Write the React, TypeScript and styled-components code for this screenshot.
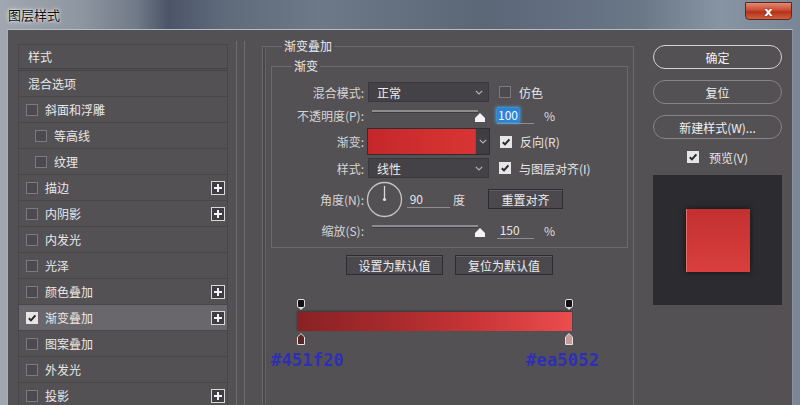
import styled, { createGlobalStyle } from 'styled-components'

const GlobalStyle = createGlobalStyle`
  html, body {
    margin: 0;
    padding: 0;
    background: #545155;
  }
  body {
    font-family: 'Noto Sans CJK SC', 'Noto Sans', sans-serif;
    font-size: 12px;
    color: #e4e4e4;
  }
  * {
    box-sizing: border-box;
  }
`

const Window = styled.div`
  width: 800px;
  height: 405px;
  overflow: hidden;
  display: flex;
  flex-direction: column;
  padding: 0 7px;
  background: linear-gradient(
    90deg,
    #a0a7b0 0%,
    #8e96a1 10%,
    #717a88 17%,
    #4b5567 21%,
    #5f6a7b 28%,
    #6d7888 40%,
    #5b6677 60%,
    #6a7787 80%,
    #8794a3 90%,
    #7a8695 100%
  );
`

const TitleBar = styled.div`
  height: 29px;
  flex-shrink: 0;
  display: flex;
  justify-content: space-between;
  align-items: flex-start;
`

const Title = styled.span`
  margin-top: 5px;
  margin-left: 1px;
  font-size: 13px;
  color: #111;
  text-shadow: 0 0 5px rgba(255, 255, 255, 0.9), 0 0 2px #fff;
`

const CloseButton = styled.div`
  margin-top: 2px;
  margin-right: 1px;
  width: 47px;
  height: 18px;
  border: 1px solid #5a2a22;
  border-radius: 0 0 4px 4px;
  background: linear-gradient(#e08a76, #cc4a32 45%, #b3321b 55%, #cf5f3f);
  display: flex;
  align-items: center;
  justify-content: center;
  color: #fff;
  font: bold 13px 'DejaVu Sans', sans-serif;
  text-shadow: 0 0 2px #6a1a10;
`

const Body = styled.div`
  flex: 1;
  display: flex;
  align-items: flex-start;
  padding: 15px 0 0 10px;
  background: #545155;
  border-top: 1px solid #b4bcc6;
  border-left: 1px solid #a6aeb8;
  border-right: 1px solid #8a94a0;
  overflow: hidden;
`

/* left list */

const Sidebar = styled.div`
  width: 227px;
  flex-shrink: 0;
  display: flex;
`

const StyleList = styled.div`
  width: 210px;
  border: 1px solid #48464a;
  border-bottom: none;
  margin-top: -1px;
`

const ListRow = styled.div<{ $indent?: boolean; $active?: boolean; $header?: boolean }>`
  height: 26px;
  display: flex;
  align-items: center;
  padding-left: ${({ $indent, $header }) => ($header ? 9 : $indent ? 16 : 7)}px;
  padding-right: 2px;
  border-bottom: 1px solid #48464a;
  background: ${({ $active }) => ($active ? '#69676b' : 'transparent')};
  color: #e8e8e8;
`

const HeaderRow = styled(ListRow)`
  border-bottom: 3px double #434145;
`

const RowLabel = styled.span`
  margin-left: 7px;
`

const ScrollTrack = styled.div`
  width: 9px;
  height: 370px;
  margin-left: 8px;
  margin-top: -4px;
  border-left: 1px solid #6e6c70;
  border-right: 1px solid #6e6c70;
`

const Box = styled.span<{ $checked?: boolean }>`
  width: 12px;
  height: 12px;
  flex-shrink: 0;
  display: flex;
  align-items: center;
  justify-content: center;
  border: 1px solid ${({ $checked }) => ($checked ? '#e6e6e6' : '#7c7a7e')};
  background: ${({ $checked }) => ($checked ? '#e6e6e6' : '#4c4a4e')};
`

const PlusBox = styled.span`
  margin-left: auto;
  width: 14px;
  height: 14px;
  display: flex;
  align-items: center;
  justify-content: center;
  border: 1px solid #d8d8d8;
  background: #3f3d41;
`

const Check = ({ checked }: { checked?: boolean }) => (
  <Box $checked={checked}>
    {checked && (
      <svg width="10" height="10" viewBox="0 0 10 10">
        <path d="M1.8 5.2 L4 7.4 L8.4 2.4" fill="none" stroke="#2a282c" strokeWidth="2" />
      </svg>
    )}
  </Box>
)

const Plus = () => (
  <PlusBox>
    <svg width="10" height="10" viewBox="0 0 10 10">
      <path d="M5 1 V9 M1 5 H9" stroke="#f2f2f2" strokeWidth="2" />
    </svg>
  </PlusBox>
)

type Item = { label: string; indent?: boolean; plus?: boolean; checked?: boolean; active?: boolean }

const items: Item[] = [
  { label: '斜面和浮雕' },
  { label: '等高线', indent: true },
  { label: '纹理', indent: true },
  { label: '描边', plus: true },
  { label: '内阴影', plus: true },
  { label: '内发光' },
  { label: '光泽' },
  { label: '颜色叠加', plus: true },
  { label: '渐变叠加', plus: true, checked: true, active: true },
  { label: '图案叠加' },
  { label: '外发光' },
  { label: '投影', plus: true },
]

/* middle panel */

const Main = styled.div`
  width: 372px;
  flex-shrink: 0;
  margin-left: 17px;
`

const OuterSet = styled.fieldset`
  margin: -7px 0 0 0;
  padding: 0 5px 0 8px;
  min-inline-size: 0;
  height: 400px;
  border: 1px solid #6c6a6e;
  box-shadow: inset 2px 0 0 #4a484c, inset 3px 0 0 #646266;
`

const Legend = styled.legend<{ $offset: number }>`
  margin-left: ${({ $offset }) => $offset}px;
  padding: 0 2px;
  line-height: 16px;
  color: #e8e8e8;
`

const InnerSet = styled.fieldset`
  margin: 4px 0 0 0;
  padding: 0 8px 7px 8px;
  min-inline-size: 0;
  border: 1px solid #6c6a6e;
`

const Controls = styled.div`
  padding-top: 8px;
  display: flex;
  flex-direction: column;
  gap: 3px;
`

const ControlRow = styled.div<{ $h: number }>`
  height: ${({ $h }) => $h}px;
  display: flex;
  align-items: center;
`

const FieldLabel = styled.span`
  width: 84px;
  margin-right: 4px;
  flex-shrink: 0;
  text-align: right;
  color: #d4d4d4;
  white-space: nowrap;
`

const Select = styled.div`
  width: 121px;
  height: 20px;
  display: flex;
  align-items: center;
  justify-content: space-between;
  padding: 0 5px 0 8px;
  background: #444246;
  border: 1px solid #3a383c;
  color: #ececec;
`

const Chevron = () => (
  <svg width="8" height="5" viewBox="0 0 8 5">
    <path d="M0.8 0.8 L4 4 L7.2 0.8" fill="none" stroke="#b4b2b6" strokeWidth="1.2" />
  </svg>
)

const CheckItem = styled.label`
  margin-left: 10px;
  display: flex;
  align-items: center;
  gap: 8px;
  color: #e4e4e4;
  white-space: nowrap;
`

const Slider = styled.div`
  position: relative;
  width: 117px;
  height: 20px;
  padding-left: 4px;
  flex-shrink: 0;
`

const Track = styled.div`
  margin-top: 5px;
  width: 106px;
  height: 2px;
  background: #8e8c90;
  box-shadow: 0 1px 0 #3e3c40;
`

const Thumb = styled.svg`
  position: absolute;
  left: 107px;
  top: 8px;
`

const ValueField = styled.div<{ $gap: number; $w?: number }>`
  margin-left: ${({ $gap }) => $gap}px;
  width: ${({ $w }) => $w ?? 37}px;
  height: 17px;
  display: flex;
  align-items: center;
  border-bottom: 1px solid #8e8c90;
  color: #e6e6e6;
  flex-shrink: 0;
`

const Selected = styled.span`
  background: #2a84da;
  color: #f4fbff;
  line-height: 14px;
  padding: 0 1px;
  box-shadow: 0 0 3px 1px #3fb2ff;
`

const Unit = styled.span<{ $gap: number }>`
  margin-left: ${({ $gap }) => $gap}px;
  color: #dcdcdc;
`

const Swatch = styled.div`
  display: flex;
  height: 27px;
  margin-left: -1px;
  border: 1px solid #302e32;
`

const SwatchFill = styled.div`
  width: 107px;
  background: linear-gradient(90deg, #c4272a, #d2302f 60%, #d83434);
`

const SwatchArrow = styled.div`
  width: 14px;
  display: flex;
  align-items: center;
  justify-content: center;
  background: #403e42;
  border-left: 1px solid #5e5c60;
`

const Dial = styled.svg`
  margin-left: -2px;
  flex-shrink: 0;
`

const FlatButton = styled.div<{ $w: number }>`
  width: ${({ $w }) => $w}px;
  height: 20px;
  display: flex;
  align-items: center;
  justify-content: center;
  background: #4b494d;
  border: 1px solid #2e2c30;
  box-shadow: inset 0 1px 0 #605e62;
  color: #ececec;
  white-space: nowrap;
`

const ResetButton = styled(FlatButton)`
  margin-left: 23px;
`

const DefaultsRow = styled.div`
  margin-top: 7px;
  display: flex;
  justify-content: center;
  gap: 12px;
`

const Editor = styled.div`
  margin-top: 24px;
  padding-left: 25px;
  width: 302px;
`

const StopRow = styled.div<{ $top?: boolean }>`
  width: 277px;
  height: ${({ $top }) => ($top ? 11 : 12)}px;
  margin-top: ${({ $top }) => ($top ? 0 : 2)}px;
  display: flex;
  justify-content: space-between;
  padding-left: 1px;
`

const GradientBar = styled.div`
  margin-top: 2px;
  margin-left: 1px;
  width: 275px;
  height: 19px;
  background: linear-gradient(90deg, #8a2124 0%, #a82a2c 35%, #c93537 65%, #ec4c4e 100%);
  box-shadow: 0 -1px 2px rgba(0, 0, 0, 0.35);
`

const HexRow = styled.div`
  margin-top: 5px;
  display: flex;
  gap: 182px;
`

const Hex = styled.span`
  font-family: 'DejaVu Sans Mono', 'Liberation Mono', monospace;
  font-weight: bold;
  font-size: 17px;
  line-height: 20px;
  letter-spacing: 0.2px;
  color: #2d30b4;
`

const TopStop = () => (
  <svg width="8" height="11" viewBox="0 0 8 11">
    <rect x="0.5" y="0.5" width="7" height="8" rx="1.5" fill="#111" stroke="#dedede" />
    <path d="M2 9 H6 L4 11 Z" fill="#dedede" />
  </svg>
)

const BottomStop = ({ fill }: { fill: string }) => (
  <svg width="8" height="12" viewBox="0 0 8 12">
    <path d="M4 0.6 L7.5 4 V11.5 H0.5 V4 Z" fill={fill} stroke="#e2e2e2" />
  </svg>
)

/* right column */

const Side = styled.div`
  width: 129px;
  flex-shrink: 0;
  margin-left: 19px;
  display: flex;
  flex-direction: column;
`

const PillButtons = styled.div`
  display: flex;
  flex-direction: column;
  gap: 11px;
`

const PillButton = styled.div<{ $primary?: boolean }>`
  height: 24px;
  border-radius: 12px;
  display: flex;
  align-items: center;
  justify-content: center;
  border: 1px solid ${({ $primary }) => ($primary ? '#d4d4d4' : '#868488')};
  color: #f0f0f0;
  white-space: nowrap;
`

const PreviewCheck = styled.label`
  margin-top: 12px;
  height: 12px;
  display: flex;
  align-items: center;
  justify-content: center;
  gap: 10px;
  color: #e6e6e6;
`

const PreviewBox = styled.div`
  margin-top: 12px;
  height: 130px;
  display: flex;
  align-items: center;
  justify-content: center;
  background: #2c2b2f;
`

const PreviewSquare = styled.div`
  width: 64px;
  height: 63px;
  background: linear-gradient(#c33030, #cf3737 50%, #d93f3f);
  border-left: 1px solid #e07070;
  box-shadow: 0 0 6px rgba(0, 0, 0, 0.6);
`

const App = () => {
  return (
    <>
      <GlobalStyle />
      <Window>
        <TitleBar>
          <Title>图层样式</Title>
          <CloseButton>x</CloseButton>
        </TitleBar>

        <Body>
          <Sidebar>
            <StyleList>
              <HeaderRow $header>样式</HeaderRow>
              <ListRow $header>混合选项</ListRow>
              {items.map((it) => (
                <ListRow key={it.label} $indent={it.indent} $active={it.active}>
                  <Check checked={it.checked} />
                  <RowLabel>{it.label}</RowLabel>
                  {it.plus && <Plus />}
                </ListRow>
              ))}
            </StyleList>
            <ScrollTrack />
          </Sidebar>

          <Main>
            <OuterSet>
              <Legend $offset={11}>渐变叠加</Legend>
              <InnerSet>
                <Legend $offset={12}>渐变</Legend>
                <Controls>
                  <ControlRow $h={20}>
                    <FieldLabel>混合模式:</FieldLabel>
                    <Select>
                      正常
                      <Chevron />
                    </Select>
                    <CheckItem>
                      <Check />
                      仿色
                    </CheckItem>
                  </ControlRow>

                  <ControlRow $h={20}>
                    <FieldLabel>不透明度(P):</FieldLabel>
                    <Slider>
                      <Track />
                      <Thumb width="10" height="9" viewBox="0 0 10 9">
                        <path d="M5 0 L10 5 V9 H0 V5 Z" fill="#f4f4f4" />
                      </Thumb>
                    </Slider>
                    <ValueField $gap={12}>
                      <Selected>100</Selected>
                    </ValueField>
                    <Unit $gap={10}>%</Unit>
                  </ControlRow>

                  <ControlRow $h={27}>
                    <FieldLabel>渐变:</FieldLabel>
                    <Swatch>
                      <SwatchFill />
                      <SwatchArrow>
                        <Chevron />
                      </SwatchArrow>
                    </Swatch>
                    <CheckItem>
                      <Check checked />
                      反向(R)
                    </CheckItem>
                  </ControlRow>

                  <ControlRow $h={20}>
                    <FieldLabel>样式:</FieldLabel>
                    <Select>
                      线性
                      <Chevron />
                    </Select>
                    <CheckItem>
                      <Check checked />
                      与图层对齐(I)
                    </CheckItem>
                  </ControlRow>

                  <ControlRow $h={36}>
                    <FieldLabel>角度(N):</FieldLabel>
                    <Dial width="37" height="37" viewBox="0 0 37 37">
                      <circle cx="18.5" cy="18.5" r="17" fill="none" stroke="#c4c4c4" strokeWidth="1.3" />
                      <path d="M18.5 18.5 V5" stroke="#d8d8d8" strokeWidth="1.3" />
                      <circle cx="18.5" cy="18.5" r="1.6" fill="#e0e0e0" />
                    </Dial>
                    <ValueField $gap={4} $w={43}>
                      &nbsp;90
                    </ValueField>
                    <Unit $gap={3}>度</Unit>
                    <ResetButton $w={75}>重置对齐</ResetButton>
                  </ControlRow>

                  <ControlRow $h={20}>
                    <FieldLabel>缩放(S):</FieldLabel>
                    <Slider>
                      <Track />
                      <Thumb width="10" height="9" viewBox="0 0 10 9">
                        <path d="M5 0 L10 5 V9 H0 V5 Z" fill="#f4f4f4" />
                      </Thumb>
                    </Slider>
                    <ValueField $gap={12}>&nbsp;150</ValueField>
                    <Unit $gap={10}>%</Unit>
                  </ControlRow>
                </Controls>
              </InnerSet>

              <DefaultsRow>
                <FlatButton $w={97}>设置为默认值</FlatButton>
                <FlatButton $w={98}>复位为默认值</FlatButton>
              </DefaultsRow>

              <Editor>
                <StopRow $top>
                  <TopStop />
                  <TopStop />
                </StopRow>
                <GradientBar />
                <StopRow>
                  <BottomStop fill="#5a2628" />
                  <BottomStop fill="#c79a9a" />
                </StopRow>
              </Editor>
              <HexRow>
                <Hex>#451f20</Hex>
                <Hex>#ea5052</Hex>
              </HexRow>
            </OuterSet>
          </Main>

          <Side>
            <PillButtons>
              <PillButton $primary>确定</PillButton>
              <PillButton>复位</PillButton>
              <PillButton>新建样式(W)...</PillButton>
            </PillButtons>
            <PreviewCheck>
              <Check checked />
              预览(V)
            </PreviewCheck>
            <PreviewBox>
              <PreviewSquare />
            </PreviewBox>
          </Side>
        </Body>
      </Window>
    </>
  )
}

export default App
